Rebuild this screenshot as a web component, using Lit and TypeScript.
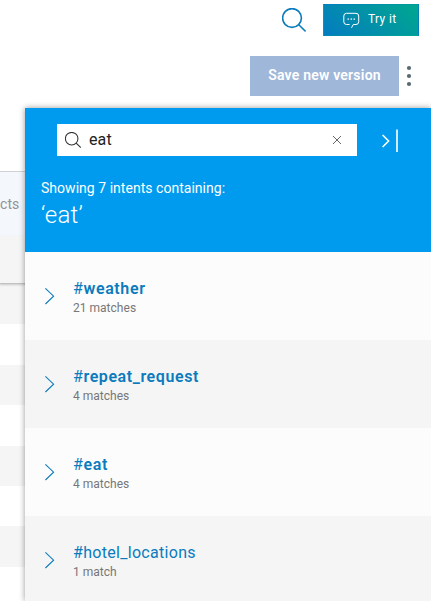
import { LitElement, html, css, svg } from "lit";
import { customElement, property } from "lit/decorators.js";

interface Intent {
  name: string;
  matches: string;
  strong: boolean;
  spacing: number;
}

const INTENTS: Intent[] = [
  { name: "weather", matches: "21 matches", strong: true, spacing: 0.62 },
  { name: "repeat_request", matches: "4 matches", strong: true, spacing: 0.58 },
  { name: "eat", matches: "4 matches", strong: true, spacing: 0.65 },
  { name: "hotel_locations", matches: "1 match", strong: false, spacing: 0.3 },
];

const magnifier = svg`<circle cx="10" cy="10" r="9.4"></circle><path d="M16.8 16.8L23.6 23.4"></path>`;

@customElement("intent-row")
export class IntentRow extends LitElement {
  @property({ attribute: false }) intent!: Intent;

  static styles = css`
    :host {
      display: flex;
      align-items: center;
      box-sizing: border-box;
      height: 88px;
      padding-left: 19px;
    }
    .chevron {
      width: 11px;
      height: 18px;
      margin-right: 18px;
      fill: none;
      stroke: #0b7bbd;
      stroke-width: 1.1;
    }
    .name {
      font-size: 16px;
      line-height: 20px;
      color: #0b7bbd;
      white-space: nowrap;
    }
    .strong {
      font-weight: 600;
    }
    .count {
      font-size: 12px;
      line-height: 18px;
      letter-spacing: 0.02px;
      color: #777;
    }
    .text {
      padding-top: 4px;
    }
  `;

  render() {
    const { name, matches, strong, spacing } = this.intent;
    return html`
      <svg class="chevron" viewBox="0 0 11 18"><path d="M1.4 1.3L9.6 9.2L1.4 17"></path></svg>
      <div class="text">
        <div class="name" style="letter-spacing:${spacing}px">#<span class=${strong ? "strong" : ""}>${name}</span></div>
        <div class="count">${matches}</div>
      </div>
    `;
  }
}

@customElement("app-root")
export class AppRoot extends LitElement {
  static styles = css`
    :host {
      display: block;
      position: relative;
      width: 431px;
      height: 601px;
      overflow: hidden;
      background: #fff;
      font-family: Roboto, "Noto Sans", sans-serif;
    }
    .top {
      display: flex;
      justify-content: flex-end;
      align-items: center;
      height: 32px;
      padding: 4px 12px 0 0;
    }
    .search {
      width: 24px;
      height: 24px;
      margin-right: 17px;
      fill: none;
      stroke: #0b7bbd;
      stroke-width: 1.6;
    }
    .try {
      display: flex;
      align-items: center;
      box-sizing: border-box;
      width: 96px;
      height: 32px;
      padding-left: 19px;
      border: 1px solid transparent;
      color: #fff;
      font-size: 12px;
      letter-spacing: 0.36px;
      background: linear-gradient(45deg, #047cc0, #00a78f);
    }
    .try-label {
      padding-bottom: 2px;
    }
    .bubble {
      width: 17px;
      height: 17px;
      margin-right: 8px;
      fill: none;
      stroke: #fff;
      stroke-width: 1;
    }
    .dots {
      fill: #fff;
      stroke: none;
    }
    .actions {
      display: flex;
      justify-content: flex-end;
      align-items: center;
      height: 40px;
      padding: 20px 19px 0 0;
    }
    .save {
      width: 149px;
      height: 40px;
      line-height: 39px;
      text-align: center;
      background: #9fb7d9;
      color: #fff;
      font-size: 14px;
      font-weight: 600;
      letter-spacing: 0.22px;
    }
    .more {
      width: 6px;
      height: 22px;
      margin-left: 7px;
      fill: #5a6872;
    }
    .table {
      margin-top: 75px;
    }
    .head {
      height: 65px;
      box-sizing: border-box;
      border-top: 1px solid #cfd1d4;
      background: #f4f7fc;
      color: #929292;
      font-size: 14px;
      line-height: 64px;
      letter-spacing: 0.1px;
    }
    .filters {
      height: 47px;
      background: #f5f5f5;
      border-bottom: 1px solid #c2c2c2;
      box-shadow: 0 1px 2px rgba(0, 0, 0, 0.18);
      position: relative;
    }
    .stripe {
      height: 40.4px;
    }
    .stripe:nth-child(odd) {
      background: #f5f5f5;
    }
    .panel {
      position: absolute;
      left: 25px;
      top: 108px;
      right: 0;
      height: 493px;
      box-shadow: 0 0 6px rgba(0, 0, 0, 0.4);
    }
    .panel-head {
      box-sizing: border-box;
      height: 144px;
      padding: 16px 16px 0;
      background: #009bef;
      color: #fff;
    }
    .query-line {
      display: flex;
      align-items: center;
      margin-left: 16px;
    }
    .field {
      display: flex;
      align-items: center;
      box-sizing: border-box;
      width: 300px;
      height: 32px;
      padding: 0 15px 0 8px;
      background: #fff;
      color: #222;
      font-size: 16px;
      letter-spacing: 0.1px;
    }
    .field-search {
      width: 16px;
      height: 16px;
      margin-right: 8px;
      fill: none;
      stroke: #333;
      stroke-width: 1.6;
    }
    .value {
      flex: 1;
      padding-bottom: 2px;
    }
    .clear {
      width: 10px;
      height: 10px;
      stroke: #666;
      stroke-width: 1;
    }
    .collapse {
      width: 18px;
      height: 24px;
      margin-left: 24px;
      fill: none;
      stroke: #fff;
      stroke-width: 1.6;
    }
    .summary {
      margin-top: 23px;
      font-size: 14px;
      line-height: 18px;
      letter-spacing: 0.03px;
    }
    .term {
      margin-top: 3px;
      font-size: 24px;
      line-height: 30px;
      font-weight: 300;
      letter-spacing: 0.2px;
    }
    intent-row {
      background: #fcfcfc;
    }
    intent-row:nth-child(even) {
      background: #f5f5f5;
    }
  `;

  render() {
    return html`
      <div class="top">
        <svg class="search" viewBox="0 0 24 24">${magnifier}</svg>
        <div class="try">
          <svg class="bubble" viewBox="0 0 17 17">
            <path d="M8.5 15.8L10.3 12.5H13Q15.7 12.5 15.7 9.8V4Q15.7 1.3 13 1.3H3.5Q.8 1.3 .8 4V9.8Q.8 12.5 3.5 12.5H6.6"></path>
            <g class="dots">
              <rect x="4.5" y="6.5" width="1.5" height="1.2"></rect>
              <rect x="7.5" y="6.5" width="1.5" height="1.2"></rect>
              <rect x="10.5" y="6.5" width="1.5" height="1.2"></rect>
            </g>
          </svg>
          <span class="try-label">Try it</span>
        </div>
      </div>
      <div class="actions">
        <div class="save">Save new version</div>
        <svg class="more" viewBox="0 0 6 22">
          <circle cx="3" cy="3" r="2.1"></circle><circle cx="3" cy="11" r="2.1"></circle><circle cx="3" cy="19" r="2.1"></circle>
        </svg>
      </div>
      <div class="table">
        <div class="head">cts</div>
        <div class="filters"></div>
        <div>
          ${Array.from({ length: 8 }, () => html`<div class="stripe"></div>`)}
        </div>
      </div>
      <div class="panel">
        <div class="panel-head">
          <div class="query-line">
            <div class="field">
              <svg class="field-search" viewBox="0 0 24 24">${magnifier}</svg>
              <span class="value">eat</span>
              <svg class="clear" viewBox="0 0 10 10"><path d="M1 1L9 9M9 1L1 9"></path></svg>
            </div>
            <svg class="collapse" viewBox="0 0 18 24"><path d="M1.6 7L7.6 13L1.6 19M16 1.5V24"></path></svg>
          </div>
          <div class="summary">Showing 7 intents containing:</div>
          <div class="term">‘eat’</div>
        </div>
        <div>${INTENTS.map((intent) => html`<intent-row .intent=${intent}></intent-row>`)}</div>
      </div>
    `;
  }
}
